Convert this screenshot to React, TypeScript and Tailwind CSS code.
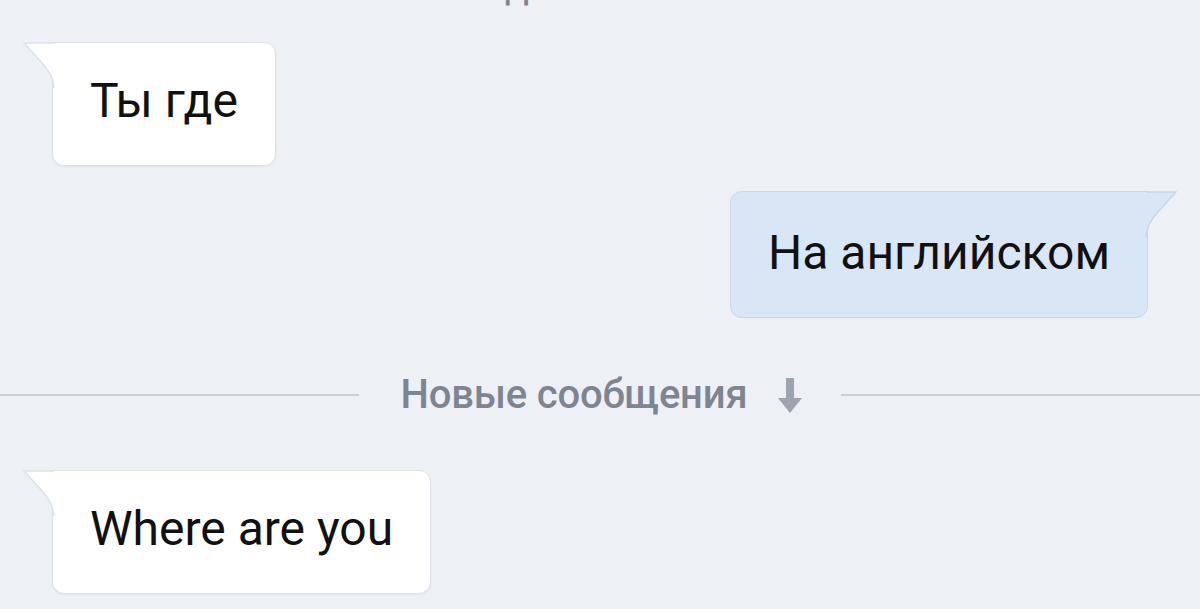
// ── IMPORTS ───────────────────────────────────────────────────────────────────
import React from "react";

// ── CONSTANTS ─────────────────────────────────────────────────────────────────
const FONT = { fontFamily: "Roboto, 'Noto Sans', sans-serif" };

// ── PARTS ─────────────────────────────────────────────────────────────────────
function TailLeft() {
  return (
    <svg
      className="absolute -left-[30px] -top-px"
      width="32"
      height="46"
      viewBox="0 0 32 46"
      fill="none"
    >
      <path d="M31 1 L1 1 L20 22 C27 30 30 36 31 46 Z" fill="#ffffff" />
      <path d="M31 1 L1 1 L20 22 C27 30 30 36 31 46" stroke="#dde2e9" strokeWidth="1.5" fill="none" />
    </svg>
  );
}

function TailRight() {
  return (
    <svg
      className="absolute -right-[30px] -top-px"
      width="32"
      height="46"
      viewBox="0 0 32 46"
      fill="none"
    >
      <path d="M1 1 L31 1 L12 22 C5 30 2 36 1 46 Z" fill="#d8e6f6" />
      <path d="M1 1 L31 1 L12 22 C5 30 2 36 1 46" stroke="#c9d6e6" strokeWidth="1.5" fill="none" />
    </svg>
  );
}

function Incoming({ text }: { text: string }) {
  return (
    <div className="relative ml-[52px] self-start bg-white border border-[#dde2e9] rounded-[12px] rounded-tl-none px-[37px] h-[124px] flex items-center shadow-[0_1px_2px_rgba(0,0,0,0.05)]">
      <TailLeft />
      <span className="text-[48px] leading-none text-[#111111] -mt-[6px]">{text}</span>
    </div>
  );
}

function Outgoing({ text }: { text: string }) {
  return (
    <div className="relative mr-[52px] self-end bg-[#d8e6f6] border border-[#c9d6e6] rounded-[12px] rounded-tr-none px-[37px] h-[127px] flex items-center">
      <TailRight />
      <span className="text-[48px] leading-none text-[#111111] -mt-[4px]">{text}</span>
    </div>
  );
}

// ── COMPONENT ─────────────────────────────────────────────────────────────────
export default function App() {
  return (
    <div className="w-full h-[609px] bg-[#edf0f5] overflow-hidden flex flex-col" style={FONT}>
      {/* Clipped date label above */}
      <div className="h-[6px] overflow-hidden flex justify-center">
        <span className="text-[40px] leading-none text-[#7d8590] -mt-[34px] ml-[-166px]">д</span>
      </div>

      <div className="mt-[36px] flex flex-col">
        <Incoming text="Ты где" />
      </div>

      <div className="mt-[25px] flex flex-col">
        <Outgoing text="На английском" />
      </div>

      {/* New messages divider */}
      <div className="mt-[60px] flex items-center h-[34px]">
        <div className="flex-1 h-[2px] bg-[#cbd0d6]" />
        <span className="ml-[42px] text-[40px] leading-none font-medium text-[#7d8590] tracking-[-0.2px]">
          Новые сообщения
        </span>
        <svg className="ml-[30px] mt-[2px]" width="26" height="36" viewBox="0 0 26 36">
          <rect x="9" y="0" width="8" height="22" fill="#9ba4af" />
          <path d="M1 20 L25 20 L13 35 Z" fill="#9ba4af" />
        </svg>
        <div className="ml-[38px] flex-1 h-[2px] bg-[#cbd0d6]" />
      </div>

      <div className="mt-[58px] flex flex-col">
        <Incoming text="Where are you" />
      </div>
    </div>
  );
}
